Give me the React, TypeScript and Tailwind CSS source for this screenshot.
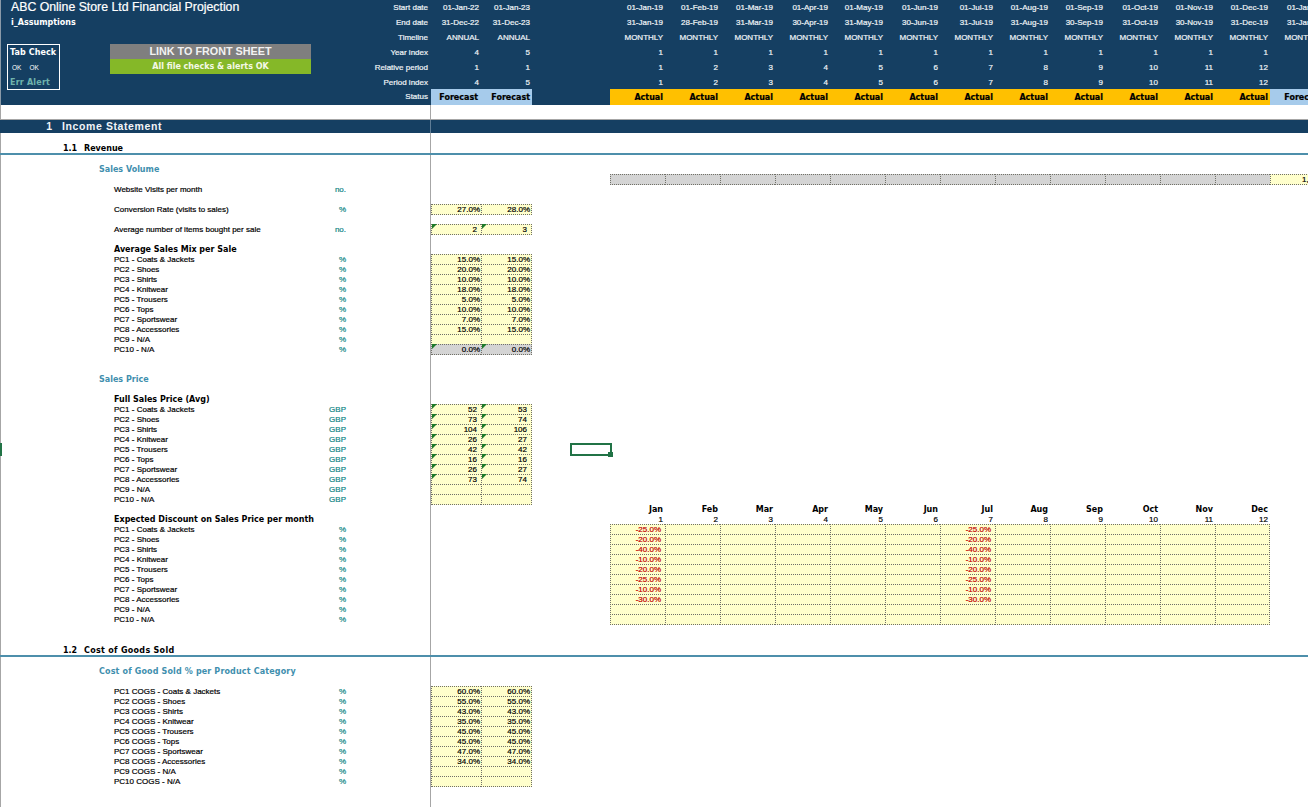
import React from "react";

const MONTH_END = ["31-Jan-19", "28-Feb-19", "31-Mar-19", "30-Apr-19", "31-May-19", "30-Jun-19", "31-Jul-19", "31-Aug-19", "30-Sep-19", "31-Oct-19", "30-Nov-19", "31-Dec-19", "31-Jan-20"];
const MONTH_START = ["01-Jan-19", "01-Feb-19", "01-Mar-19", "01-Apr-19", "01-May-19", "01-Jun-19", "01-Jul-19", "01-Aug-19", "01-Sep-19", "01-Oct-19", "01-Nov-19", "01-Dec-19", "01-Jan-20"];
const MONTHS = ["Jan", "Feb", "Mar", "Apr", "May", "Jun", "Jul", "Aug", "Sep", "Oct", "Nov", "Dec"];
const TWELVE = [0, 1, 2, 3, 4, 5, 6, 7, 8, 9, 10, 11];
const PRODUCTS = ["Coats & Jackets", "Shoes", "Shirts", "Knitwear", "Trousers", "Tops", "Sportswear", "Accessories", "N/A", "N/A"];

const MIX = [["15.0%", "15.0%"], ["20.0%", "20.0%"], ["10.0%", "10.0%"], ["18.0%", "18.0%"], ["5.0%", "5.0%"], ["10.0%", "10.0%"], ["7.0%", "7.0%"], ["15.0%", "15.0%"], ["", ""], ["0.0%", "0.0%"]];
const PRICE = [["52", "53"], ["73", "74"], ["104", "106"], ["26", "27"], ["42", "42"], ["16", "16"], ["26", "27"], ["73", "74"], ["", ""], ["", ""]];
const DISCOUNT = ["-25.0%", "-20.0%", "-40.0%", "-10.0%", "-20.0%", "-25.0%", "-10.0%", "-30.0%", "", ""];
const COGS = [["60.0%", "60.0%"], ["55.0%", "55.0%"], ["43.0%", "43.0%"], ["35.0%", "35.0%"], ["45.0%", "45.0%"], ["45.0%", "45.0%"], ["47.0%", "47.0%"], ["34.0%", "34.0%"], ["", ""], ["", ""]];

const regular = "font-['Liberation_Sans',sans-serif] text-[8px] leading-[10px] [-webkit-text-stroke:0.2px]";
const body = "font-['Liberation_Sans',sans-serif] text-[8px] leading-[12px] [-webkit-text-stroke:0.2px]";
const cellText = "font-['Liberation_Sans',sans-serif] text-[8px] leading-[9px] [-webkit-text-stroke:0.2px]";
const bold = "font-['DejaVu_Sans',sans-serif] text-[8px] leading-[10px] font-bold";

function HeaderRow({ label, a, b, months, last }: { label: string; a: string; b: string; months: string[]; last: string }) {
  return (
    <div className={`flex h-[15px] items-center text-right text-[#f0f4f7] ${regular}`}>
      <div className="w-[66px] shrink-0 pr-[3px]">{label}</div>
      <div className="w-[50px] shrink-0 pr-[2px]">{a}</div>
      <div className="w-[51px] shrink-0 pr-[2px]">{b}</div>
      <div className="w-[78px] shrink-0" />
      {months.map((m, i) => (
        <div key={i} className="w-[55px] shrink-0 pr-[2px]">{m}</div>
      ))}
      <div className="w-[55px] shrink-0 pr-[2px]">{last}</div>
    </div>
  );
}

function Header() {
  return (
    <div className="flex h-[105px] bg-[#153f62]">
      <div className="w-[365px] shrink-0 border-l border-[#8a9aa8]">
        <div className="h-[15px] pl-[10px] font-['Liberation_Sans',sans-serif] text-[12.3px] leading-[15px] text-white [-webkit-text-stroke:0.2px]">ABC Online Store Ltd Financial Projection</div>
        <div className={`flex h-[15px] items-center pl-[10px] text-white ${bold}`}>i_Assumptions</div>
        <div className="mt-[14px] flex items-start pl-[6px]">
          <div className="h-[46px] w-[53px] border border-white pl-[2px]">
            <div className={`h-[15px] whitespace-nowrap pt-[3px] tracking-[0.1px] text-white ${bold}`}>Tab Check</div>
            <div className="flex h-[15px] items-center gap-[8px] pl-[2px] font-['Liberation_Sans',sans-serif] text-[6.5px] text-white">
              <span>OK</span>
              <span>OK</span>
            </div>
            <div className={`h-[15px] whitespace-nowrap pt-[3px] tracking-[0.2px] text-[#6fb3ad] ${bold}`}>Err Alert</div>
          </div>
          <div className="ml-[50px] w-[201px]">
            <div className="flex h-[15px] items-center justify-center bg-[#7f7f7f] font-['Liberation_Sans',sans-serif] text-[10.8px] font-bold text-[#f2f2f2]">LINK TO FRONT SHEET</div>
            <div className={`flex h-[15px] items-center justify-center bg-[#85b828] text-[#f4f8e6] ${bold}`}>All file checks &amp; alerts OK</div>
          </div>
        </div>
      </div>
      <div className="min-w-0 flex-1 overflow-hidden">
        <HeaderRow label="Start date" a="01-Jan-22" b="01-Jan-23" months={MONTH_START.slice(0, 12)} last={MONTH_START[12]} />
        <HeaderRow label="End date" a="31-Dec-22" b="31-Dec-23" months={MONTH_END.slice(0, 12)} last={MONTH_END[12]} />
        <HeaderRow label="Timeline" a="ANNUAL" b="ANNUAL" months={TWELVE.map(() => "MONTHLY")} last="MONTHLY" />
        <HeaderRow label="Year index" a="4" b="5" months={TWELVE.map(() => "1")} last="1" />
        <HeaderRow label="Relative period" a="1" b="1" months={TWELVE.map((i) => String(i + 1))} last="1" />
        <div className={`flex h-[14px] items-start text-right text-[#f0f4f7] ${regular} leading-[15px]`}>
          <div className="w-[66px] shrink-0 pr-[3px]">Period index</div>
          <div className="w-[50px] shrink-0 pr-[2px]">4</div>
          <div className="w-[51px] shrink-0 pr-[2px]">5</div>
          <div className="w-[78px] shrink-0" />
          {TWELVE.map((i) => (
            <div key={i} className="w-[55px] shrink-0 pr-[2px]">{i + 1}</div>
          ))}
        </div>
        <div className={`flex h-[16px] items-center text-right ${regular}`}>
          <div className="w-[66px] shrink-0 pr-[3px] text-[#f0f4f7]">Status</div>
          <div className={`flex h-full w-[50px] shrink-0 items-center justify-end bg-[#a6cbeb] pr-[3px] pt-[1px] text-black ${bold}`}>Forecast</div>
          <div className={`flex h-full w-[51px] shrink-0 items-center justify-end bg-[#a6cbeb] pr-[2px] pt-[1px] text-black ${bold}`}>Forecast</div>
          <div className="w-[78px] shrink-0" />
          {TWELVE.map((i) => (
            <div key={i} className={`flex h-full w-[55px] shrink-0 items-center justify-end bg-[#ffc000] pr-[2px] pt-[1px] text-black ${bold}`}>Actual</div>
          ))}
          <div className={`flex h-full w-[55px] shrink-0 items-center justify-end bg-[#a6cbeb] pr-[2px] pt-[1px] text-black ${bold}`}>Forecast</div>
        </div>
      </div>
    </div>
  );
}

// one sheet row: left label column up to the frozen pane line, then the cells
function Row({ h = "h-[10px]", children, right }: { h?: string; children?: React.ReactNode; right?: React.ReactNode }) {
  return (
    <div className={`flex ${h}`}>
      <div className="flex w-[431px] shrink-0 border-x border-x-[#a6a6a6]">{children}</div>
      {right}
    </div>
  );
}

function Label({ text, unit, isBold }: { text: string; unit?: string; isBold?: boolean }) {
  return (
    <>
      <div className={`w-[345px] shrink-0 whitespace-nowrap pl-[113px] text-black ${isBold ? `pt-[1px] ${bold}` : body}`}>{text}</div>
      {unit && <div className={`w-0 shrink-0 whitespace-nowrap text-[#0f8585] ${body}`}><span className="block w-[30px] -translate-x-[30px] text-right">{unit}</span></div>}
    </>
  );
}

function Cell({ value, grey, mark, edge }: { value?: string; grey?: boolean; mark?: boolean; edge?: boolean }) {
  const isPct = !value || value.endsWith("%");
  return (
    <div className={`relative h-[11px] shrink-0 border-y border-l border-dotted border-[#707068] text-right text-black ${cellText} ${isPct ? "pr-[1px]" : "pr-[4px]"} ${edge ? "w-[51px] border-r" : "w-[50px]"} ${grey ? "bg-[#d4d4d4]" : "bg-[#ffffcc]"}`}>
      {mark && <span className="absolute -top-px left-0 h-0 w-0 border-r-[5px] border-t-[5px] border-r-transparent border-t-[#1e7a2a]" />}
      {value}
    </div>
  );
}

function AnnualCells({ values, grey, mark }: { values: string[]; grey?: boolean; mark?: boolean }) {
  return (
    <>
      <Cell value={values[0]} grey={grey} mark={mark} />
      <Cell value={values[1]} grey={grey} mark={mark} edge />
    </>
  );
}

function SectionRule({ h, top, number, title, tracking = "" }: { h: string; top: string; number: string; title: string; tracking?: string }) {
  return (
    <div className={`border-b-2 border-[#4d8fab] ${h}`}>
      <div className={`flex h-full w-[431px] items-start border-x border-x-[#a6a6a6] pl-[62px] text-black ${top} ${bold}`}>
        <span className="w-[21px]">{number}</span>
        <span className={tracking}>{title}</span>
      </div>
    </div>
  );
}

function SubHeading({ text, tracking = "" }: { text: string; tracking?: string }) {
  return (
    <Row>
      <div className={`whitespace-nowrap pl-[98px] pt-[1px] text-[#3f8fae] ${bold} ${tracking}`}>{text}</div>
    </Row>
  );
}

function App() {
  return (
    <div className="relative h-[807px] w-[1308px] overflow-hidden bg-white">
      <Header />

      <div className="flex h-[15px] border-b border-[#a6a6a6]">
        <div className="w-[431px] border-x border-x-[#a6a6a6]" />
      </div>
      <div className="flex h-[13px] bg-[#153f62]">
        <div className="flex w-[431px] items-center border-r border-[#5f7d96] font-['Liberation_Sans',sans-serif] text-[10.5px] font-bold text-[#f0f4f7]">
          <span className="w-[52px] text-right">1</span>
          <span className="ml-[10px] tracking-[0.6px]">Income Statement</span>
        </div>
      </div>
      <SectionRule h="h-[22px]" top="pt-[11px]" number="1.1" title="Revenue" />
      <Row h="h-[9px]" />
      <SubHeading text="Sales Volume" />
      <Row
        right={
          <>
            <div className="w-[179px] shrink-0" />
            {TWELVE.map((i) => (
              <div key={i} className="h-[11px] w-[55px] shrink-0 border-y border-l border-dotted border-[#707068] bg-[#d4d4d4]" />
            ))}
            <div className={`h-[11px] w-[55px] shrink-0 border-y border-l border-dotted border-[#707068] bg-[#ffffcc] pr-[3px] text-right text-black ${cellText}`}>1,000</div>
          </>
        }
      />
      <Row><Label text="Website Visits per month" unit="no." /></Row>
      <Row />
      <Row right={<AnnualCells values={["27.0%", "28.0%"]} />}><Label text="Conversion Rate (visits to sales)" unit="%" /></Row>
      <Row />
      <Row right={<AnnualCells values={["2", "3"]} mark />}><Label text="Average number of items bought per sale" unit="no." /></Row>
      <Row />
      <Row><Label text="Average Sales Mix per Sale" isBold /></Row>
      {PRODUCTS.map((p, i) => (
        <Row key={i} right={<AnnualCells values={MIX[i]} grey={i === 9} mark={i === 9} />}>
          <Label text={`PC${i + 1} - ${p}`} unit="%" />
        </Row>
      ))}
      <Row h="h-[20px]" />
      <SubHeading text="Sales Price" />
      <Row />
      <Row><Label text="Full Sales Price (Avg)" isBold /></Row>
      {PRODUCTS.map((p, i) => (
        <Row key={i} right={<AnnualCells values={PRICE[i]} mark={i < 8} />}>
          <Label text={`PC${i + 1} - ${p}`} unit="GBP" />
        </Row>
      ))}
      <Row
        right={
          <>
            <div className="w-[179px] shrink-0" />
            {MONTHS.map((m) => (
              <div key={m} className={`w-[55px] shrink-0 pr-[2px] pt-[1px] text-right text-black ${bold}`}>{m}</div>
            ))}
          </>
        }
      />
      <Row
        right={
          <>
            <div className="w-[179px] shrink-0" />
            {TWELVE.map((i) => (
              <div key={i} className={`w-[55px] shrink-0 pr-[2px] text-right text-black ${body}`}>{i + 1}</div>
            ))}
          </>
        }
      >
        <Label text="Expected Discount on Sales Price per month" isBold />
      </Row>
      {PRODUCTS.map((p, i) => (
        <Row
          key={i}
          right={
            <>
              <div className="w-[179px] shrink-0" />
              {TWELVE.map((m) => (
                <div key={m} className={`h-[11px] w-[55px] shrink-0 border-y border-l border-dotted border-[#707068] bg-[#ffffcc] pr-[4px] text-right text-[#c00000] ${cellText} ${m === 11 ? "border-r" : ""}`}>
                  {m === 0 || m === 6 ? DISCOUNT[i] : ""}
                </div>
              ))}
            </>
          }
        >
          <Label text={`PC${i + 1} - ${p}`} unit="%" />
        </Row>
      ))}
      <Row h="h-[21px]" />
      <SectionRule h="h-[12px]" top="pt-[1px]" number="1.2" title="Cost of Goods Sold" tracking="tracking-[0.3px]" />
      <Row h="h-[9px]" />
      <SubHeading text="Cost of Good Sold % per Product Category" tracking="tracking-[0.15px]" />
      <Row />
      {PRODUCTS.map((p, i) => (
        <Row key={i} right={<AnnualCells values={COGS[i]} />}>
          <Label text={`PC${i + 1} COGS - ${p}`} unit="%" />
        </Row>
      ))}
      <Row h="h-[30px]" />

      {/* active cell selection */}
      <div className="absolute left-[570px] top-[443px] h-[13px] w-[42px] border-2 border-[#217346]" />
      <div className="absolute left-[608px] top-[452px] h-[5px] w-[5px] bg-[#217346]" />
      <div className="absolute left-0 top-[443px] h-[13px] w-[2px] bg-[#217346]" />
    </div>
  );
}

export default App;
